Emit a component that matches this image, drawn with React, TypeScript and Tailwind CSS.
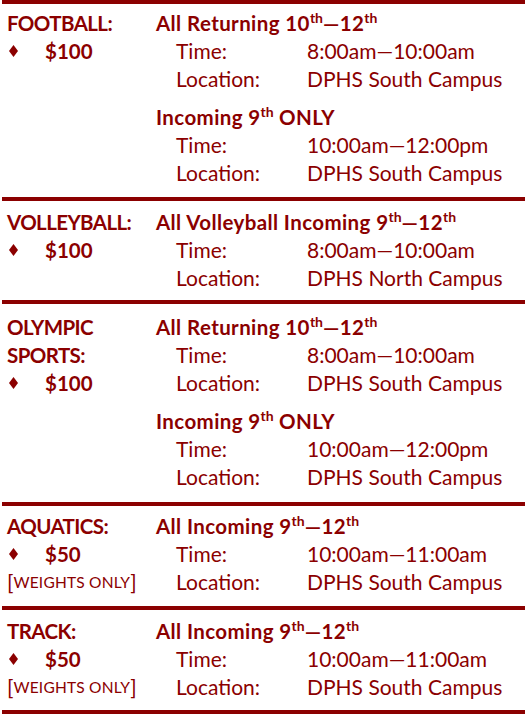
import React from "react";

const RED = "text-[#8b0000]";

function Diamond() {
  return (
    <svg width="9" height="12" viewBox="0 0 9 12" className="inline-block">
      <polygon points="4.5,0 9,6 4.5,12 0,6" fill="#8b0000" />
    </svg>
  );
}

function Th() {
  return <sup className="text-[14px] font-bold -top-[0.6em] tracking-normal">th</sup>;
}

function Rule() {
  return <div className="h-[4px] bg-[#8b0000] mx-[2px]" />;
}

type Detail = { heading: React.ReactNode; time: string; loc: string };

function Label({ children }: { children: React.ReactNode }) {
  return (
    <div className="h-[28px] font-bold flex items-center text-[20.5px] tracking-[-0.6px] whitespace-nowrap">
      {children}
    </div>
  );
}

function Price({ amount }: { amount: string }) {
  return (
    <div className="flex items-center h-[28px]">
      <span className="w-[38px] pl-[2px] flex items-center">
        <Diamond />
      </span>
      <span className="font-bold text-[20.5px]">{amount}</span>
    </div>
  );
}

function Weights() {
  return (
    <div className="h-[28px] flex items-center whitespace-nowrap">
      <span>[</span>
      <span className="text-[15.5px] tracking-[0.2px]">WEIGHTS ONLY</span>
      <span>]</span>
    </div>
  );
}

function DetailBlock({ d, first }: { d: Detail; first: boolean }) {
  return (
    <div className={first ? "" : "mt-[10px]"}>
      <div className="h-[28px] font-bold flex items-center whitespace-nowrap text-[20.5px] tracking-[0.4px]">
        {d.heading}
      </div>
      <div className="pl-[20px] grid grid-cols-[131px_1fr]">
        <div className="h-[28px] flex items-center">Time:</div>
        <div className="h-[28px] flex items-center whitespace-nowrap">{d.time}</div>
        <div className="h-[28px] flex items-center">Location:</div>
        <div className="h-[28px] flex items-center whitespace-nowrap">{d.loc}</div>
      </div>
    </div>
  );
}

function Block({
  left,
  details,
  pt,
  pb,
}: {
  left: React.ReactNode;
  details: Detail[];
  pt: string;
  pb: string;
}) {
  return (
    <div className={`flex ${pt} ${pb}`}>
      <div className="w-[156px] pl-[7px] shrink-0">{left}</div>
      <div className="flex-1">
        {details.map((d, i) => (
          <DetailBlock key={i} d={d} first={i === 0} />
        ))}
      </div>
    </div>
  );
}

const returning = (
  <span>
    All Returning 10<Th />—12<Th />
  </span>
);
const incoming9 = (
  <span>
    Incoming 9<Th /> ONLY
  </span>
);
const allIncoming = (
  <span>
    All Incoming 9<Th />—12<Th />
  </span>
);

export default function App() {
  return (
    <div
      className={`w-[527px] h-[716px] bg-white ${RED} text-[21px] leading-[28px]`}
      style={{ fontFamily: "Lato, 'Open Sans', sans-serif" }}
    >
      <Rule />
      <Block
        pt="pt-[5px]"
        pb="pb-[10px]"
        left={
          <>
            <Label>FOOTBALL:</Label>
            <Price amount="$100" />
          </>
        }
        details={[
          { heading: returning, time: "8:00am—10:00am", loc: "DPHS South Campus" },
          { heading: incoming9, time: "10:00am—12:00pm", loc: "DPHS South Campus" },
        ]}
      />
      <Rule />
      <Block
        pt="pt-[7px]"
        pb="pb-[8px]"
        left={
          <>
            <Label>VOLLEYBALL:</Label>
            <Price amount="$100" />
          </>
        }
        details={[
          {
            heading: (
              <span>
                All Volleyball Incoming 9<Th />—12<Th />
              </span>
            ),
            time: "8:00am—10:00am",
            loc: "DPHS North Campus",
          },
        ]}
      />
      <Rule />
      <Block
        pt="pt-[9px]"
        pb="pb-[11px]"
        left={
          <>
            <Label>OLYMPIC</Label>
            <Label>SPORTS:</Label>
            <Price amount="$100" />
          </>
        }
        details={[
          { heading: returning, time: "8:00am—10:00am", loc: "DPHS South Campus" },
          { heading: incoming9, time: "10:00am—12:00pm", loc: "DPHS South Campus" },
        ]}
      />
      <Rule />
      <Block
        pt="pt-[6px]"
        pb="pb-[10px]"
        left={
          <>
            <Label>AQUATICS:</Label>
            <Price amount="$50" />
            <Weights />
          </>
        }
        details={[{ heading: allIncoming, time: "10:00am—11:00am", loc: "DPHS South Campus" }]}
      />
      <Rule />
      <Block
        pt="pt-[7px]"
        pb="pb-[9px]"
        left={
          <>
            <Label>TRACK:</Label>
            <Price amount="$50" />
            <Weights />
          </>
        }
        details={[{ heading: allIncoming, time: "10:00am—11:00am", loc: "DPHS South Campus" }]}
      />
      <Rule />
    </div>
  );
}
